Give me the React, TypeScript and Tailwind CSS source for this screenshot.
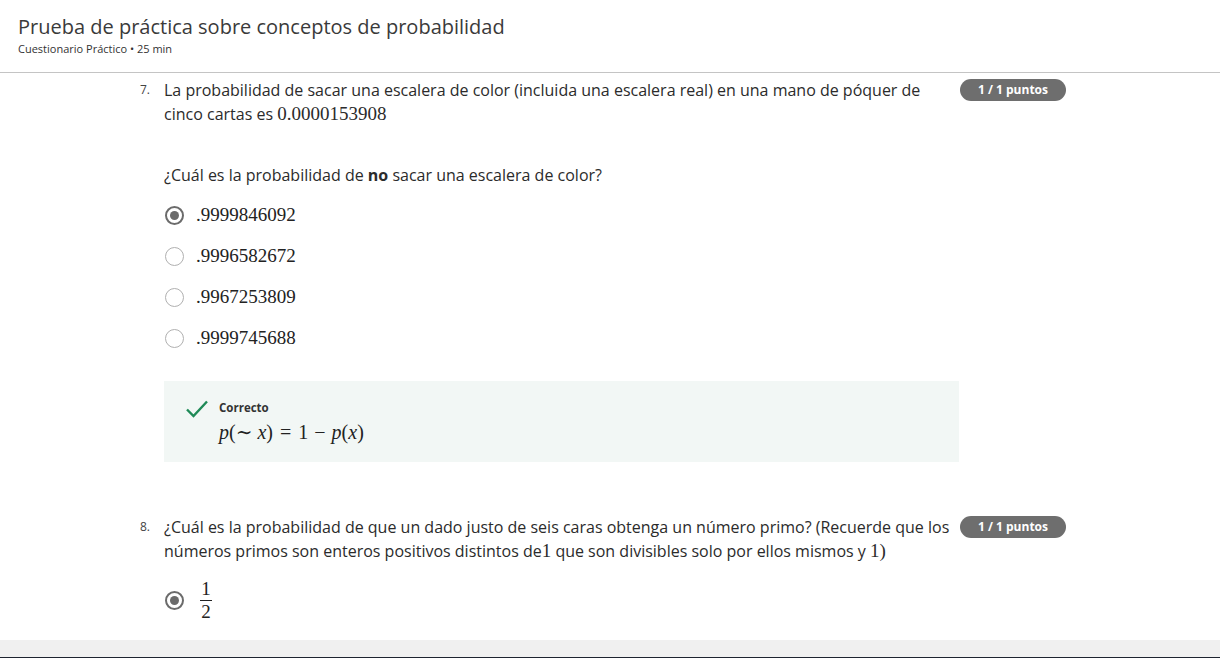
import React from "react";

const sans = "font-['Open_Sans','Noto_Sans',sans-serif]";
const serif = "font-['Liberation_Serif','DejaVu_Serif',serif]";

function Badge() {
  return (
    <span className="mt-[1px] inline-flex h-[22px] w-[106px] shrink-0 items-center justify-center rounded-full bg-[#6e6e6e] text-[12px] font-bold text-white">
      1 / 1 puntos
    </span>
  );
}

function Radio({ checked }: { checked?: boolean }) {
  return checked ? (
    <span className="flex h-[19px] w-[19px] shrink-0 items-center justify-center rounded-full border-2 border-[#6b6b6b]">
      <span className="h-[9px] w-[9px] rounded-full bg-[#6b6b6b]" />
    </span>
  ) : (
    <span className="h-[19px] w-[19px] shrink-0 rounded-full border-[1.5px] border-[#b0b0b0]" />
  );
}

const options = [".9999846092", ".9996582672", ".9967253809", ".9999745688"];

export default function App() {
  return (
    <div className={`flex h-[658px] w-[1220px] flex-col overflow-hidden bg-white ${sans}`}>
      <header className="h-[73px] shrink-0 border-b border-[#c4c4c4] pl-[18px] pt-[13px]">
        <h1 className="text-[20px] leading-[28px] text-[#3a3a3a]">
          Prueba de práctica sobre conceptos de probabilidad
        </h1>
        <p className="text-[11px] leading-[16px] text-[#333]">Cuestionario Práctico • 25 min</p>
      </header>

      <main className="flex-1 overflow-hidden pl-[140px] pt-[5px] text-[#2b2b2b]">
        <div className="flex w-[926px] items-start">
          <span className="w-[24px] pt-[1px] text-[12px] leading-[22px] text-[#444]">7.</span>
          <p className="w-[796px] text-[16px] leading-[24px]">
            La probabilidad de sacar una escalera de color (incluida una escalera real) en una mano de póquer de
            cinco cartas es <span className={`${serif} text-[19px] leading-[20px]`}>0.0000153908</span>
          </p>
          <Badge />
        </div>

        <div className="pl-[24px]">
          <p className="mt-[37px] text-[16px] leading-[24px]">
            ¿Cuál es la probabilidad de <b>no</b> sacar una escalera de color?
          </p>

          <div className="mt-[8px]">
            {options.map((o, i) => (
              <div key={o} className="flex h-[41px] items-center gap-[12px] pl-[1px]">
                <Radio checked={i === 0} />
                <span className={`${serif} text-[19px] text-[#222]`}>{o}</span>
              </div>
            ))}
          </div>

          <div className="mt-[22px] flex h-[81px] w-[795px] gap-[11px] bg-[#f2f7f5] pl-[22px] pt-[19px]">
            <svg width="22" height="18" viewBox="0 0 22 18" className="shrink-0">
              <path d="M1 9.5 L7.5 16 L21 1.5" fill="none" stroke="#1f8a57" strokeWidth="2.4" />
            </svg>
            <div>
              <p className="text-[11.5px] font-bold leading-[16px] text-[#333]">Correcto</p>
              <p className={`${serif} mt-[3px] flex items-baseline text-[20px] leading-[26px] text-[#222]`}>
                <i>p</i>(<span className="mr-[5px]">∼</span>
                <i>x</i>)<span className="mx-[7px]">=</span>1<span className="mx-[6px]">−</span>
                <i>p</i>(<i>x</i>)
              </p>
            </div>
          </div>
        </div>

        <div className="mt-[53px] flex w-[926px] items-start">
          <span className="w-[24px] pt-[1px] text-[12px] leading-[22px] text-[#444]">8.</span>
          <p className="w-[796px] text-[16px] leading-[24px]">
            ¿Cuál es la probabilidad de que un dado justo de seis caras obtenga un número primo? (Recuerde que los
            números primos son enteros positivos distintos de
            <span className={`${serif} text-[19px] leading-[20px]`}>1</span> que son divisibles solo por ellos
            mismos y <span className={`${serif} text-[19px] leading-[20px]`}>1)</span>
          </p>
          <Badge />
        </div>

        <div className="mt-[16px] flex items-center gap-[16px] pl-[25px]">
          <Radio checked />
          <span className={`${serif} flex flex-col items-center text-[19px] leading-[20px] text-[#222]`}>
            <span>1</span>
            <span className="my-[1px] h-[1px] w-[12px] bg-[#222]" />
            <span>2</span>
          </span>
        </div>
      </main>

      <div className="h-[17px] shrink-0 bg-[#f0f0f0]" />
      <div className="h-[1px] shrink-0 bg-[#1e2430]" />
    </div>
  );
}
